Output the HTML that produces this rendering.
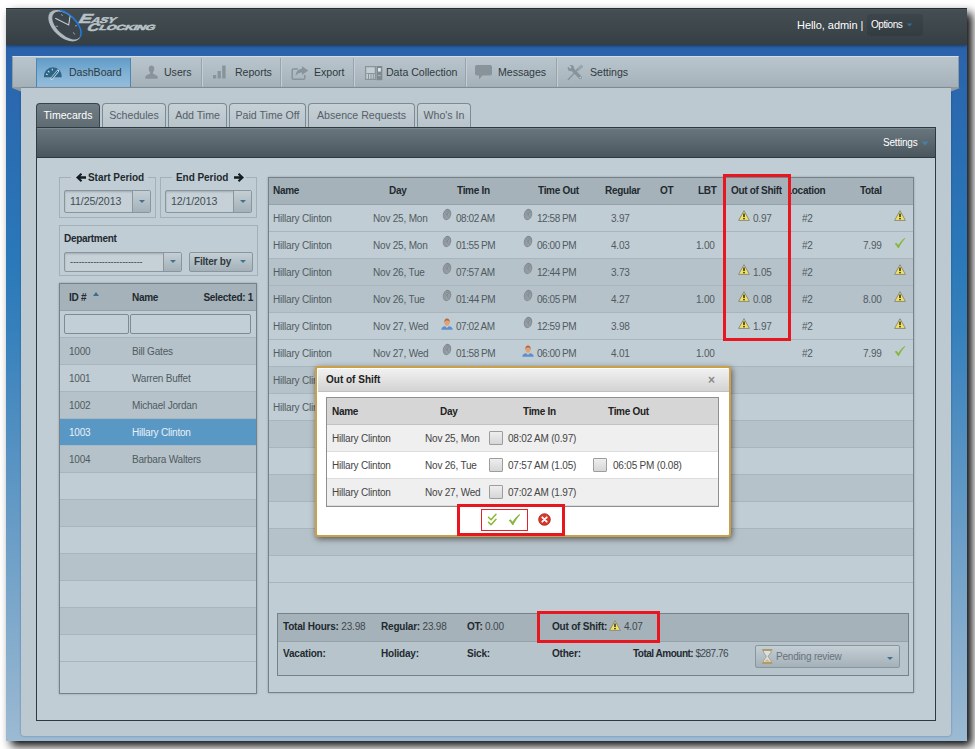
<!DOCTYPE html>
<html lang="en">
<head>
<meta charset="utf-8">
<title>EasyClocking - Timecards</title>
<style>
*{box-sizing:border-box;margin:0;padding:0}
html,body{width:975px;height:749px;overflow:hidden;background:#fff}
body{position:relative;font-family:"Liberation Sans",Arial,sans-serif;font-size:10px;letter-spacing:-.2px;color:#3d484e}
.abs{position:absolute}
#shot{position:absolute;left:6px;top:8px;width:961px;height:733px;overflow:hidden;
  background:linear-gradient(#2a63ac 0px,#2a63ac 42px,#2a6eb2 147px,#2a78b9 247px,#3580bc 320px,#4a8bc0 397px,#6fa0c8 547px,#91b3cf 687px,#9cbad3 733px);
  box-shadow:5px 5px 9px 0 rgba(0,0,0,.97)}
/* everything inside #shot is positioned relative to page coords via wrapper */
#pg{position:absolute;left:-6px;top:-8px;width:975px;height:749px}
#topbar{left:6px;top:8px;width:961px;height:37px;box-shadow:0 1px 3px rgba(0,0,0,.45),inset 0 1px 0 #4c565b;background:linear-gradient(#444e53,#3c464b 55%,#343e43);border-top:1px solid #232d32}
#hello{letter-spacing:-.05px;left:797px;top:19px;color:#fff;font-size:11px;white-space:nowrap}
#opts{left:871px;top:19px;color:#fff;font-size:10px;letter-spacing:-.45px;white-space:nowrap}
#navbar{left:12px;top:56px;width:947px;height:32px;background:linear-gradient(#b9c5cc,#b0bcc3 50%,#a5b1b8);border:1px solid #8d999f;border-top-color:#d5dde1}
.nav{letter-spacing:-.03px;position:absolute;top:58px;height:29px;line-height:29px;font-size:10.6px;color:#2f3a40;white-space:nowrap}
.navsep{position:absolute;top:58px;height:29px;width:1px;background:#98a4ab;box-shadow:1px 0 0 #c3ced4}
#dash{left:36px;top:58px;width:95px;height:29px;background:linear-gradient(#5f9bc7,#7fb0d4 50%,#95bddb);border-left:1px solid #4c86b1;border-right:1px solid #4c86b1}
#panel{left:21px;top:88px;width:930px;height:648px;background:#bdc9d1;border-radius:0 0 3px 3px;box-shadow:0 0 2px rgba(10,40,90,.45)}
.tab{letter-spacing:0;position:absolute;top:103px;height:25px;line-height:23px;font-size:10.6px;color:#556067;text-align:center;white-space:nowrap;
  background:linear-gradient(#c6d1d7,#b7c3ca);border:1px solid #7e8a91;border-bottom:none;border-radius:4px 4px 0 0}
.tab.on{background:linear-gradient(#727e85,#5e6a71);color:#fff;border-color:#39444a}
#tbar{left:36px;top:127px;width:900px;height:31px;background:linear-gradient(#6a767d,#5b676e 50%,#4a565d);border:1px solid #2f3a40;box-shadow:inset 0 1px 0 #7b878e}
#inner{left:36px;top:158px;width:900px;height:563px;background:#c1cdd4;border:1px solid #2f3a40;border-top:none}
fieldset{position:absolute;border:1px solid #a4b0b7;padding:0}
legend{font-weight:bold;font-size:10px;letter-spacing:-.05px;color:#1f2a30;padding:0 3px;white-space:nowrap}
.combo{letter-spacing:-.1px;position:absolute;height:23px;border:1px solid #8a969d;border-radius:2px;background:#c5d0d7;font-size:10.6px;line-height:21px;color:#434e54;padding-left:5px;box-shadow:inset 0 1px 2px rgba(0,0,0,.18)}
.combo i{position:absolute;right:0;top:0;bottom:0;width:18px;border-left:1px solid #8a969d;background:linear-gradient(#c3ced5,#a5b1b8)}
.combo i:after,.btn i:after,.car:after{content:"";position:absolute;left:6px;top:9px;border:3px solid transparent;border-top:3.5px solid #44718f;border-bottom:none}
.btn{position:absolute;height:20px;border:1px solid #8a969d;border-radius:2px;background:linear-gradient(#c3ced5,#a5b1b8);font-size:10px;line-height:18px;color:#2f3a40;font-weight:bold;padding-left:4px}
.btn i{position:absolute;right:2px;top:0;width:16px;height:18px}
.grid{position:absolute;border:1px solid #76828a;background:#c1cdd4;overflow:hidden;box-shadow:0 0 2px rgba(0,0,0,.25)}
.row{position:absolute;left:0;right:0;height:27px;border-bottom:1px solid #a9b5bc;line-height:27px;white-space:nowrap;color:#505b61}
.row.d{background:#b6c2c9}
.row.h{background:#a6b2b9;color:#1f2a30;font-weight:bold;letter-spacing:-.3px;border-bottom:1px solid #96a2a9}
.row.s{background:#5998c4;color:#e9f1f7;border-bottom-color:#a9b9c6}
.row span{position:absolute;top:0}
.c{text-align:center}
.r{text-align:right}
.red{position:absolute;border:3px solid #e8161f}

.arw{display:inline-block;vertical-align:-1px}
legend{line-height:12px;height:12px}
legend>*{position:relative;top:1px}
.row .sortup{width:0;height:0;border:3px solid transparent;border-bottom:4px solid #3d6f91;border-top:none}
.row .inp{height:20px;border:1px solid #7f8b92;border-radius:2px;background:#c3cfd6}
.row .fp{position:absolute;top:3px;margin-left:-1px;width:10px;height:13px}
.row .usr{position:absolute;top:5px;margin-left:-2px;width:12px;height:12px}
.warn{position:absolute;top:5px;margin-left:-1px;width:12px;height:11px}
.chk{position:absolute;top:5px;margin-left:-1px;width:12px;height:12px}
.sm{position:absolute;white-space:nowrap;color:#3d484e}
.sm b{color:#1f2a30}
#pop{background:#fff;border:2px solid #cba046;border-radius:3px;box-shadow:1px 2px 6px rgba(0,0,0,.55)}
#pop .pg .row{left:0;right:0}
.row .cb{top:6px;margin-left:-1px;width:14px;height:14px;border:1px solid #9d9d9d;border-radius:1px;background:linear-gradient(#eee,#d6d6d6)}
.combo i.sm2:after,.btn i.sm2:after{top:7px}
.row .t{letter-spacing:-.45px}
</style>
</head>
<body>
<div id="shot"><div id="pg">

<div id="topbar" class="abs"></div>
<div class="abs" style="left:867px;top:14px;width:56px;height:22px;border-radius:3px;background:rgba(0,0,0,.09)"></div>
<div id="hello" class="abs">Hello, admin |</div>
<div id="opts" class="abs">Options</div>

<div id="navbar" class="abs"></div>
<div id="dash" class="abs"></div>
<div class="nav" style="left:69px">DashBoard</div>
<div class="nav" style="left:164px">Users</div>
<div class="nav" style="left:235px">Reports</div>
<div class="nav" style="left:314px">Export</div>
<div class="nav" style="left:386px">Data Collection</div>
<div class="nav" style="left:498px">Messages</div>
<div class="nav" style="left:590px">Settings</div>
<div class="navsep" style="left:201px"></div>
<div class="navsep" style="left:280px"></div>
<div class="navsep" style="left:353px"></div>
<div class="navsep" style="left:465px"></div>
<div class="navsep" style="left:556px"></div>

<div id="panel" class="abs"></div>
<svg class="abs" style="left:44px;top:8px" width="120" height="36" viewBox="0 0 120 36">
<g transform="translate(20.700,17.700) rotate(43)">
<ellipse cx="0" cy="0" rx="19.600" ry="11.400" fill="#aeb8be"/>
<ellipse cx="1.300" cy="-1.500" rx="17.600" ry="9.500" fill="#3b454b"/>
<path d="M-14 -7.970A19.600 11.400 0 0 1 19.100 -2.500" fill="none" stroke="#1f7bdc" stroke-width="1.600"/>
</g>
<path d="M11.300 10.300 24.700 17 26 8.300" fill="none" stroke="#c3ccd1" stroke-width="1.100" stroke-linejoin="miter"/>
<path d="M11.500 18.300h2.500M31 17.800h2M29.300 24.300l1.400 2.300M17.500 6.200l1 1.800" stroke="#aeb8be" stroke-width=".8"/>
<g font-family="Liberation Sans,Arial,sans-serif" font-weight="bold" fill="#b9c2c7" stroke="#b9c2c7" stroke-width=".5">
<text transform="translate(33.200,15) skewX(-30) scale(1.480,1)" font-size="13">E</text>
<text transform="translate(46.200,15) skewX(-30) scale(1.450,1)" font-size="8.400">ASY</text>
<text transform="translate(41.800,23) skewX(-30) scale(1.480,1)" font-size="11">C</text>
<text transform="translate(54.200,22.400) skewX(-30) scale(1.700,1)" font-size="7.400">LOCKING</text>
</g>
</svg>
<svg class="abs" style="left:43px;top:66px" width="20" height="15" viewBox="0 0 20 15"><path d="M1.050 11.300A8.850 8.850 0 1 1 18.600 11.300Z" fill="#2e6585"/><path d="M3 8l1.700.8M5 5l1.400 1.300M9.300 2.800v1.800" stroke="#c5dcea" stroke-width="1.100"/><path d="M8.700 12.500 14.900 5" stroke="#d5e6f1" stroke-width="2.600" stroke-linecap="round"/><path d="M8.900 12.200 14.700 5.200" stroke="#2e6585" stroke-width="1.200" stroke-linecap="round"/></svg>
<svg class="abs" style="left:145px;top:65px" width="13" height="15" viewBox="0 0 13 15"><path d="M6.500 .5c1.800 0 2.800 1.400 2.800 3.200 0 1.500-.6 2.800-1.300 3.500v1.300c0 .6 3.600 1.400 4.300 2.600.3.500.4 1.700.4 2.600H.3c0-.9.100-2.100.4-2.600C1.400 9.900 5 9.100 5 8.500V7.200C4.300 6.500 3.700 5.200 3.700 3.700 3.700 1.900 4.700.5 6.500.5Z" fill="#88939a"/></svg>
<svg class="abs" style="left:212px;top:65px" width="15" height="14" viewBox="0 0 15 14"><path d="M1 10h3.200v3.500H1zM5.600 6h3.200v7.500H5.600zM10.200 .5h3.400v13h-3.400z" fill="#88939a"/></svg>
<svg class="abs" style="left:291px;top:65px" width="18" height="16" viewBox="0 0 18 16"><path d="M7 4H2.500A1.300 1.300 0 0 0 1.200 5.300V13A1.300 1.300 0 0 0 2.500 14.300H12.500A1.300 1.300 0 0 0 13.800 13V10" fill="none" stroke="#88939a" stroke-width="1.500"/><path d="M11 1.200 17.300 5.600 11 10V7.400C8 7.400 6 8.600 4.600 11 4.800 7 7 4 11 3.800Z" fill="#88939a"/></svg>
<svg class="abs" style="left:364px;top:65px" width="19" height="16" viewBox="0 0 19 16"><path d="M1.600 1.600H11.400V14.400H1.600Z" fill="#c3cdd3" stroke="#88939a" stroke-width="1.300"/><path d="M2.500 8.500h8.400M4.500 9v5M7 9v5M9.300 9v5" stroke="#88939a" stroke-width="1"/><path d="M12.500 1h5.800v14.200h-5.800z" fill="#7e8990"/><path d="M14 3h2.800v3.600H14z" fill="#dfe6ea"/><path d="M14 10.500h2.800" stroke="#aab4ba" stroke-width="1"/></svg>
<svg class="abs" style="left:474px;top:64px" width="19" height="17" viewBox="0 0 19 17"><path d="M2.800 1h13.400A1.800 1.800 0 0 1 18 2.800V9.800A1.800 1.800 0 0 1 16.200 11.600H8.600L5 15.300V11.600H2.800A1.800 1.800 0 0 1 1 9.800V2.800A1.800 1.800 0 0 1 2.800 1Z" fill="#88939a"/></svg>
<svg class="abs" style="left:567px;top:64px" width="17" height="17" viewBox="0 0 17 17"><path d="M15.300 1.700 10 6.300" stroke="#98a3aa" stroke-width="3.100"/><path d="M10.600 5.600 1.300 15.500" stroke="#8a959c" stroke-width="1.400" stroke-linecap="round"/><path d="M4.800 4.800 13.200 13.400" stroke="#88939a" stroke-width="3.500" stroke-linecap="round"/><circle cx="3.900" cy="4.100" r="3.200" fill="#88939a"/><path d="M4.640 3.360.640-.640-.740.740 3.160 4.840Z" fill="#b5c1c8"/><circle cx="13.300" cy="13.500" r=".8" fill="#c6d0d6"/></svg>
<svg class="abs" style="left:12px;top:88px" width="9" height="4" viewBox="0 0 9 4"><path d="M0 0H9V3.600Z" fill="#8f9ba2"/></svg>
<svg class="abs" style="left:951px;top:88px" width="9" height="4" viewBox="0 0 9 4"><path d="M0 0H9L0 3.600Z" fill="#8f9ba2"/></svg>
<svg class="abs" style="left:906px;top:23px" width="7" height="4" viewBox="0 0 8 5"><path d="M.5.500h7L4 4.500Z" fill="#3b6a8b"/></svg>


<div class="tab on" style="left:36px;width:64px">Timecards</div>
<div class="tab" style="left:102px;width:64px">Schedules</div>
<div class="tab" style="left:168px;width:59px">Add Time</div>
<div class="tab" style="left:229px;width:77px">Paid Time Off</div>
<div class="tab" style="left:308px;width:107px">Absence Requests</div>
<div class="tab" style="left:417px;width:54px">Who's In</div>

<div id="tbar" class="abs"></div>
<div class="abs" style="left:883px;top:137px;color:#fff;font-size:10px">Settings</div>
<div id="inner" class="abs"></div>
<svg class="abs" style="left:921px;top:141px" width="8" height="5" viewBox="0 0 8 5"><path d="M.5.500h7L4 4.500Z" fill="#4a7fa5"/></svg>


<fieldset style="left:59px;top:171px;width:97px;height:47px"><legend style="margin-left:11px;padding:0 4px 0 5px"><svg class="arw" width="10" height="9" viewBox="0 0 10 9"><path d="M0 4.500 4.800 0 6.200 1.400 4.400 3.300H10V5.700H4.400L6.200 7.600 4.800 9Z" fill="#141c20"/></svg><span style="margin-left:2px">Start Period</span></legend></fieldset>
<fieldset style="left:160px;top:171px;width:97px;height:47px"><legend style="margin-left:11px;padding:0 2px 0 4px"><span style="margin-right:6px">End Period</span><svg class="arw" width="10" height="9" viewBox="0 0 10 9"><path d="M10 4.500 5.200 0 3.800 1.400 5.600 3.300H0V5.700H5.600L3.800 7.600 5.200 9Z" fill="#141c20"/></svg></legend></fieldset>
<div class="combo" style="left:64px;top:190px;width:87px">11/25/2013<i></i></div>
<div class="combo" style="left:165px;top:190px;width:87px">12/1/2013<i></i></div>
<div class="abs" style="left:59px;top:225px;width:199px;height:51px;border:1px solid #a4b0b7"></div>
<div class="abs" style="left:64px;top:233px;font-weight:bold;color:#1f2a30;letter-spacing:-.3px">Department</div>
<div class="combo" style="left:64px;top:252px;width:118px;height:20px;line-height:18px;font-size:9px;letter-spacing:-.1px;color:#2f3a40">-------------------------<i class="sm2"></i></div>
<div class="btn" style="left:189px;top:252px;width:64px">Filter by<i class="sm2"></i></div>
<div class="grid" style="left:59px;top:283px;width:198px;height:411px">
<div class="row h" style="top:0"><span style="left:9px">ID #</span><span class="sortup" style="left:33px;top:8px"></span><span style="left:72px">Name</span><span style="right:3px">Selected: 1</span></div>
<div class="row" style="top:27px;background:#c1cdd4"><span class="inp" style="left:4px;top:3px;width:65px"></span><span class="inp" style="left:70px;top:3px;width:121px"></span></div>
<div class="row d" style="top:54px"><span style="left:9px">1000</span><span style="left:72px">Bill Gates</span></div>
<div class="row" style="top:81px"><span style="left:9px">1001</span><span style="left:72px">Warren Buffet</span></div>
<div class="row d" style="top:108px"><span style="left:9px">1002</span><span style="left:72px">Michael Jordan</span></div>
<div class="row s" style="top:135px"><span style="left:9px">1003</span><span style="left:72px">Hillary Clinton</span></div>
<div class="row d" style="top:162px"><span style="left:9px">1004</span><span style="left:72px">Barbara Walters</span></div>
<div class="row" style="top:189px"></div>
<div class="row d" style="top:216px"></div>
<div class="row" style="top:243px"></div>
<div class="row d" style="top:270px"></div>
<div class="row" style="top:297px"></div>
<div class="row d" style="top:324px"></div>
<div class="row" style="top:351px"></div>
</div>
<div class="grid" style="left:268px;top:177px;width:646px;height:516px">
<div class="row h" style="top:0;height:27px;line-height:26px"><span style="left:4px">Name</span><span style="left:120px">Day</span><span style="left:188px">Time In</span><span style="left:269px">Time Out</span><span style="left:336px">Regular</span><span style="left:391px">OT</span><span style="left:429px">LBT</span><span style="left:462px;width:51px;overflow:hidden">Out of Shift</span><span style="left:519px;width:40px;overflow:hidden;text-indent:-2px">Location</span><span style="left:591px">Total</span></div>
<div class="row" style="top:27px"><span style="left:4px">Hillary Clinton</span><span style="left:104px">Nov 25, Mon</span><svg class="fp" style="left:174px" viewBox="0 0 10 13"><g transform="rotate(14 5 6.500)"><ellipse cx="5" cy="6.500" rx="4.100" ry="5.700" fill="#7f888e"/><g fill="none" stroke="#a9b2b8" stroke-width=".55"><ellipse cx="5" cy="6.800" rx="2.900" ry="4.300"/><ellipse cx="5" cy="7.200" rx="1.600" ry="2.800"/><path d="M5 6.500v3"/></g></g></svg><span class="t" style="left:187px">08:02 AM</span><svg class="fp" style="left:255px" viewBox="0 0 10 13"><g transform="rotate(14 5 6.500)"><ellipse cx="5" cy="6.500" rx="4.100" ry="5.700" fill="#7f888e"/><g fill="none" stroke="#a9b2b8" stroke-width=".55"><ellipse cx="5" cy="6.800" rx="2.900" ry="4.300"/><ellipse cx="5" cy="7.200" rx="1.600" ry="2.800"/><path d="M5 6.500v3"/></g></g></svg><span class="t" style="left:268px">12:58 PM</span><span style="left:342px">3.97</span><svg class="warn" style="left:470px" viewBox="0 0 12 11"><path d="M6 .7 11.400 10.400H.6Z" fill="#f2e25e" stroke="#8b8c80" stroke-width="1" stroke-linejoin="round"/><path d="M6 3.4v3.6" stroke="#2b2b2b" stroke-width="1.5"/><circle cx="6" cy="8.6" r=".85" fill="#2b2b2b"/></svg><span style="left:484px">0.97</span><span style="left:533px">#2</span><svg class="warn" style="left:626px" viewBox="0 0 12 11"><path d="M6 .7 11.400 10.400H.6Z" fill="#f2e25e" stroke="#8b8c80" stroke-width="1" stroke-linejoin="round"/><path d="M6 3.4v3.6" stroke="#2b2b2b" stroke-width="1.5"/><circle cx="6" cy="8.6" r=".85" fill="#2b2b2b"/></svg></div>
<div class="row" style="top:54px"><span style="left:4px">Hillary Clinton</span><span style="left:104px">Nov 25, Mon</span><svg class="fp" style="left:174px" viewBox="0 0 10 13"><g transform="rotate(14 5 6.500)"><ellipse cx="5" cy="6.500" rx="4.100" ry="5.700" fill="#7f888e"/><g fill="none" stroke="#a9b2b8" stroke-width=".55"><ellipse cx="5" cy="6.800" rx="2.900" ry="4.300"/><ellipse cx="5" cy="7.200" rx="1.600" ry="2.800"/><path d="M5 6.500v3"/></g></g></svg><span class="t" style="left:187px">01:55 PM</span><svg class="fp" style="left:255px" viewBox="0 0 10 13"><g transform="rotate(14 5 6.500)"><ellipse cx="5" cy="6.500" rx="4.100" ry="5.700" fill="#7f888e"/><g fill="none" stroke="#a9b2b8" stroke-width=".55"><ellipse cx="5" cy="6.800" rx="2.900" ry="4.300"/><ellipse cx="5" cy="7.200" rx="1.600" ry="2.800"/><path d="M5 6.500v3"/></g></g></svg><span class="t" style="left:268px">06:00 PM</span><span style="left:342px">4.03</span><span style="left:427px">1.00</span><span style="left:533px">#2</span><span style="left:594px">7.99</span><svg class="chk" style="left:626px" viewBox="0 0 13 12"><path d="M.8 6.900 2.500 5.800 4.600 8.300C6.500 5.300 8.800 2.600 11.500 .5L12.200 1.200C9.600 4 7.200 7.500 5.300 11.500H4.300C3.300 9.700 2.200 8.200.8 6.900Z" fill="#86b63a"/></svg></div>
<div class="row d" style="top:81px"><span style="left:4px">Hillary Clinton</span><span style="left:104px">Nov 26, Tue</span><svg class="fp" style="left:174px" viewBox="0 0 10 13"><g transform="rotate(14 5 6.500)"><ellipse cx="5" cy="6.500" rx="4.100" ry="5.700" fill="#7f888e"/><g fill="none" stroke="#a9b2b8" stroke-width=".55"><ellipse cx="5" cy="6.800" rx="2.900" ry="4.300"/><ellipse cx="5" cy="7.200" rx="1.600" ry="2.800"/><path d="M5 6.500v3"/></g></g></svg><span class="t" style="left:187px">07:57 AM</span><svg class="fp" style="left:255px" viewBox="0 0 10 13"><g transform="rotate(14 5 6.500)"><ellipse cx="5" cy="6.500" rx="4.100" ry="5.700" fill="#7f888e"/><g fill="none" stroke="#a9b2b8" stroke-width=".55"><ellipse cx="5" cy="6.800" rx="2.900" ry="4.300"/><ellipse cx="5" cy="7.200" rx="1.600" ry="2.800"/><path d="M5 6.500v3"/></g></g></svg><span class="t" style="left:268px">12:44 PM</span><span style="left:342px">3.73</span><svg class="warn" style="left:470px" viewBox="0 0 12 11"><path d="M6 .7 11.400 10.400H.6Z" fill="#f2e25e" stroke="#8b8c80" stroke-width="1" stroke-linejoin="round"/><path d="M6 3.4v3.6" stroke="#2b2b2b" stroke-width="1.5"/><circle cx="6" cy="8.6" r=".85" fill="#2b2b2b"/></svg><span style="left:484px">1.05</span><span style="left:533px">#2</span><svg class="warn" style="left:626px" viewBox="0 0 12 11"><path d="M6 .7 11.400 10.400H.6Z" fill="#f2e25e" stroke="#8b8c80" stroke-width="1" stroke-linejoin="round"/><path d="M6 3.4v3.6" stroke="#2b2b2b" stroke-width="1.5"/><circle cx="6" cy="8.6" r=".85" fill="#2b2b2b"/></svg></div>
<div class="row d" style="top:108px"><span style="left:4px">Hillary Clinton</span><span style="left:104px">Nov 26, Tue</span><svg class="fp" style="left:174px" viewBox="0 0 10 13"><g transform="rotate(14 5 6.500)"><ellipse cx="5" cy="6.500" rx="4.100" ry="5.700" fill="#7f888e"/><g fill="none" stroke="#a9b2b8" stroke-width=".55"><ellipse cx="5" cy="6.800" rx="2.900" ry="4.300"/><ellipse cx="5" cy="7.200" rx="1.600" ry="2.800"/><path d="M5 6.500v3"/></g></g></svg><span class="t" style="left:187px">01:44 PM</span><svg class="fp" style="left:255px" viewBox="0 0 10 13"><g transform="rotate(14 5 6.500)"><ellipse cx="5" cy="6.500" rx="4.100" ry="5.700" fill="#7f888e"/><g fill="none" stroke="#a9b2b8" stroke-width=".55"><ellipse cx="5" cy="6.800" rx="2.900" ry="4.300"/><ellipse cx="5" cy="7.200" rx="1.600" ry="2.800"/><path d="M5 6.500v3"/></g></g></svg><span class="t" style="left:268px">06:05 PM</span><span style="left:342px">4.27</span><span style="left:427px">1.00</span><svg class="warn" style="left:470px" viewBox="0 0 12 11"><path d="M6 .7 11.400 10.400H.6Z" fill="#f2e25e" stroke="#8b8c80" stroke-width="1" stroke-linejoin="round"/><path d="M6 3.4v3.6" stroke="#2b2b2b" stroke-width="1.5"/><circle cx="6" cy="8.6" r=".85" fill="#2b2b2b"/></svg><span style="left:484px">0.08</span><span style="left:533px">#2</span><span style="left:594px">8.00</span><svg class="warn" style="left:626px" viewBox="0 0 12 11"><path d="M6 .7 11.400 10.400H.6Z" fill="#f2e25e" stroke="#8b8c80" stroke-width="1" stroke-linejoin="round"/><path d="M6 3.4v3.6" stroke="#2b2b2b" stroke-width="1.5"/><circle cx="6" cy="8.6" r=".85" fill="#2b2b2b"/></svg></div>
<div class="row" style="top:135px"><span style="left:4px">Hillary Clinton</span><span style="left:104px">Nov 27, Wed</span><svg class="usr" style="left:174px" viewBox="0 0 12 12"><path d="M.3 11.800c0-2.200 1.800-3.200 3.700-3.500h4c1.900.300 3.700 1.300 3.700 3.500Z" fill="#5a8fd2"/><path d="M4.600 7.200h2.800v1.600L6 10 4.600 8.800Z" fill="#e6c3a5"/><ellipse cx="6" cy="4.600" rx="2.500" ry="3.100" fill="#dca27c"/><path d="M3.300 4.800C3 2 4.200.4 6 .4S9 2 8.700 4.800C8.300 3.200 7.600 2.600 6 2.600S3.700 3.200 3.300 4.800Z" fill="#b8652e"/></svg><span class="t" style="left:187px">07:02 AM</span><svg class="fp" style="left:255px" viewBox="0 0 10 13"><g transform="rotate(14 5 6.500)"><ellipse cx="5" cy="6.500" rx="4.100" ry="5.700" fill="#7f888e"/><g fill="none" stroke="#a9b2b8" stroke-width=".55"><ellipse cx="5" cy="6.800" rx="2.900" ry="4.300"/><ellipse cx="5" cy="7.200" rx="1.600" ry="2.800"/><path d="M5 6.500v3"/></g></g></svg><span class="t" style="left:268px">12:59 PM</span><span style="left:342px">3.98</span><svg class="warn" style="left:470px" viewBox="0 0 12 11"><path d="M6 .7 11.400 10.400H.6Z" fill="#f2e25e" stroke="#8b8c80" stroke-width="1" stroke-linejoin="round"/><path d="M6 3.4v3.6" stroke="#2b2b2b" stroke-width="1.5"/><circle cx="6" cy="8.6" r=".85" fill="#2b2b2b"/></svg><span style="left:484px">1.97</span><span style="left:533px">#2</span><svg class="warn" style="left:626px" viewBox="0 0 12 11"><path d="M6 .7 11.400 10.400H.6Z" fill="#f2e25e" stroke="#8b8c80" stroke-width="1" stroke-linejoin="round"/><path d="M6 3.4v3.6" stroke="#2b2b2b" stroke-width="1.5"/><circle cx="6" cy="8.6" r=".85" fill="#2b2b2b"/></svg></div>
<div class="row" style="top:162px"><span style="left:4px">Hillary Clinton</span><span style="left:104px">Nov 27, Wed</span><svg class="fp" style="left:174px" viewBox="0 0 10 13"><g transform="rotate(14 5 6.500)"><ellipse cx="5" cy="6.500" rx="4.100" ry="5.700" fill="#7f888e"/><g fill="none" stroke="#a9b2b8" stroke-width=".55"><ellipse cx="5" cy="6.800" rx="2.900" ry="4.300"/><ellipse cx="5" cy="7.200" rx="1.600" ry="2.800"/><path d="M5 6.500v3"/></g></g></svg><span class="t" style="left:187px">01:58 PM</span><svg class="usr" style="left:255px" viewBox="0 0 12 12"><path d="M.3 11.800c0-2.200 1.800-3.200 3.700-3.500h4c1.900.300 3.700 1.300 3.700 3.500Z" fill="#5a8fd2"/><path d="M4.600 7.200h2.800v1.600L6 10 4.600 8.800Z" fill="#e6c3a5"/><ellipse cx="6" cy="4.600" rx="2.500" ry="3.100" fill="#dca27c"/><path d="M3.300 4.800C3 2 4.200.4 6 .4S9 2 8.700 4.800C8.300 3.200 7.600 2.600 6 2.600S3.700 3.200 3.300 4.800Z" fill="#b8652e"/></svg><span class="t" style="left:268px">06:00 PM</span><span style="left:342px">4.01</span><span style="left:427px">1.00</span><span style="left:533px">#2</span><span style="left:594px">7.99</span><svg class="chk" style="left:626px" viewBox="0 0 13 12"><path d="M.8 6.900 2.500 5.800 4.600 8.300C6.500 5.300 8.800 2.600 11.500 .5L12.200 1.200C9.600 4 7.200 7.500 5.300 11.500H4.300C3.300 9.700 2.200 8.200.8 6.900Z" fill="#86b63a"/></svg></div>
<div class="row d" style="top:189px"><span style="left:4px">Hillary Clinton</span></div>
<div class="row" style="top:216px"><span style="left:4px">Hillary Clinton</span></div>
<div class="row d" style="top:243px"></div>
<div class="row" style="top:270px"></div>
<div class="row d" style="top:297px"></div>
<div class="row" style="top:324px"></div>
<div class="row d" style="top:351px"></div>
<div class="row" style="top:378px"></div>
<div class="abs" style="left:8px;top:435px;width:632px;height:63px;border:1px solid #76828a;background:#b8c4cb">
<div class="abs" style="left:0;top:0;right:0;height:28px;background:#a6b2b9;border-bottom:1px solid #96a2a9"></div>
<div class="sm" style="left:5px;top:7px"><b>Total Hours:</b> 23.98</div>
<div class="sm" style="left:103px;top:7px"><b>Regular:</b> 23.98</div>
<div class="sm" style="left:189px;top:7px"><b>OT:</b> 0.00</div>
<div class="sm" style="left:274px;top:7px"><b>Out of Shift:</b></div>
<svg class="warn"  style="left:332px;top:6px" viewBox="0 0 12 11"><path d="M6 .7 11.400 10.400H.6Z" fill="#f2e25e" stroke="#8b8c80" stroke-width="1" stroke-linejoin="round"/><path d="M6 3.4v3.6" stroke="#2b2b2b" stroke-width="1.5"/><circle cx="6" cy="8.6" r=".85" fill="#2b2b2b"/></svg>
<div class="sm" style="left:346px;top:7px">4.07</div>
<div class="sm" style="left:5px;top:34px"><b>Vacation:</b></div>
<div class="sm" style="left:103px;top:34px"><b>Holiday:</b></div>
<div class="sm" style="left:189px;top:34px"><b>Sick:</b></div>
<div class="sm" style="left:274px;top:34px"><b>Other:</b></div>
<div class="sm" style="left:355px;top:34px;letter-spacing:-.5px"><b>Total Amount:</b> $287.76</div>
<div class="btn" style="left:477px;top:31px;width:145px;height:23px;line-height:21px;font-weight:normal;padding-left:20px;color:#68737a">Pending review<i style="top:2px"></i>
<svg class="abs" style="left:5px;top:3px" width="12.500" height="15" viewBox="0 0 11 15" preserveAspectRatio="none"><path d="M1 .8h9M1 14.2h9" stroke="#b39a62" stroke-width="1.600"/><path d="M2 1.5h7c0 3.5-2.6 4.3-2.6 6S9 10 9 13.5H2c0-3.5 2.6-4.300 2.600-6S2 5 2 1.500Z" fill="#d6e2ea" stroke="#a89466" stroke-width=".8"/><path d="M3.300 12.800c.5-1.600 1.500-2 2.200-2.600.7.600 1.700 1 2.200 2.600Z" fill="#d9b676"/></svg></div>
</div>
</div>
<div id="pop" class="abs" style="left:315px;top:366px;width:416px;height:171px"><div class="abs" style="left:1px;top:1px;right:0;bottom:0">
<div class="abs" style="left:0;top:0;right:0;height:23px;background:linear-gradient(#f1f1f1,#d3d3d3);border-bottom:1px solid #c0c0c0"></div>
<div class="abs" style="left:8px;top:5px;font-weight:bold;color:#222;letter-spacing:0">Out of Shift</div>
<div class="abs" style="left:390px;top:4px;font-weight:bold;color:#8a8a8a;font-size:12px">&#215;</div>
<div class="abs pg" style="left:8px;top:28px;width:393px;height:110px;border:1px solid #8f8f8f;background:#fff">
<div class="row h" style="top:0;background:#d6d6d6;color:#222;border-bottom:1px solid #c2c2c2"><span style="left:5px">Name</span><span style="left:113px">Day</span><span style="left:196px">Time In</span><span style="left:281px">Time Out</span></div>
<div class="row" style="top:27px;background:#efefef;border-bottom:1px solid #ddd;color:#444"><span style="left:5px">Hillary Clinton</span><span style="left:98px">Nov 25, Mon</span><span class="cb" style="left:163px"></span><span style="left:181px">08:02 AM (0.97)</span></div>
<div class="row" style="top:54px;background:#fff;border-bottom:1px solid #ddd;color:#444"><span style="left:5px">Hillary Clinton</span><span style="left:98px">Nov 26, Tue</span><span class="cb" style="left:163px"></span><span style="left:181px">07:57 AM (1.05)</span><span class="cb" style="left:267px"></span><span style="left:286px">06:05 PM (0.08)</span></div>
<div class="row" style="top:81px;background:#efefef;border-bottom:1px solid #ddd;color:#444"><span style="left:5px">Hillary Clinton</span><span style="left:98px">Nov 27, Wed</span><span class="cb" style="left:163px"></span><span style="left:181px">07:02 AM (1.97)</span></div>
</div>
<div class="abs" style="left:163px;top:140px;width:47px;height:22px;border:1px solid #e8202a"></div>
<svg class="abs" style="left:169px;top:144px" width="11" height="14" viewBox="0 0 11 14"><path d="M1.500 4.200 4 6.800 9 1.200M1.500 9.200 4 11.800 9 6.200" fill="none" stroke="#8ab833" stroke-width="1.5" stroke-linecap="round" stroke-linejoin="round"/></svg>
<svg class="abs" style="left:190px;top:144px" width="13" height="13" viewBox="0 0 13 12"><path d="M.8 6.900 2.500 5.800 4.600 8.300C6.500 5.300 8.800 2.600 11.500 .5L12.200 1.200C9.600 4 7.200 7.500 5.300 11.500H4.300C3.300 9.700 2.200 8.200.8 6.900Z" fill="#86b63a"/></svg>
<svg class="abs" style="left:220px;top:144px" width="13" height="13" viewBox="0 0 14 14"><circle cx="7" cy="7" r="6.300" fill="#d8392c" stroke="#a81e14" stroke-width=".8"/><path d="M4.600 4.600l4.800 4.800M9.400 4.600l-4.800 4.800" stroke="#fff" stroke-width="1.900" stroke-linecap="round"/></svg>
</div></div>
<div class="red" style="left:723px;top:174px;width:68px;height:167px"></div>
<div class="red" style="left:457px;top:504px;width:108px;height:32px"></div>
<div class="red" style="left:537px;top:611px;width:123px;height:32px"></div>

</div></div>
</body>
</html>
